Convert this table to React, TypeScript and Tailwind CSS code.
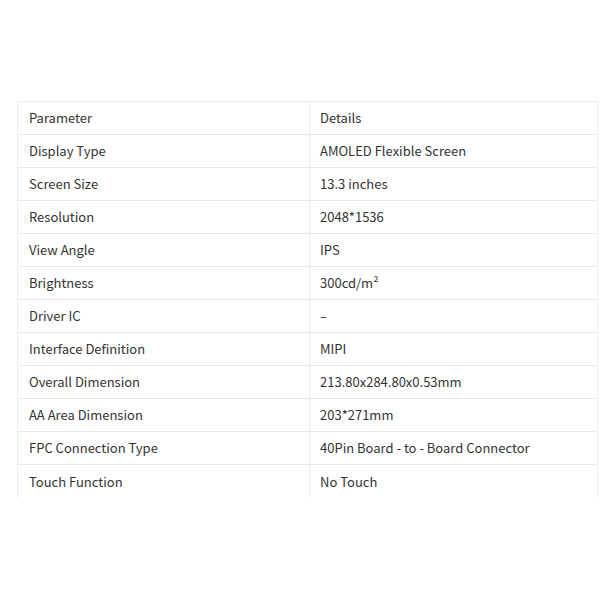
const rows: [string, React.ReactNode][] = [
  ["Parameter", "Details"],
  ["Display Type", "AMOLED Flexible Screen"],
  ["Screen Size", "13.3 inches"],
  ["Resolution", "2048*1536"],
  ["View Angle", "IPS"],
  ["Brightness", "300cd/m²"],
  ["Driver IC", "–"],
  ["Interface Definition", "MIPI"],
  ["Overall Dimension", "213.80x284.80x0.53mm"],
  ["AA Area Dimension", "203*271mm"],
  ["FPC Connection Type", "40Pin Board - to - Board Connector"],
  ["Touch Function", "No Touch"],
];

export default function App() {
  return (
    <div className="w-[600px] h-[600px] bg-white pt-[101px] pl-[17px] pr-[2px] font-['Noto_Sans_CJK_SC',sans-serif] text-[13px] text-[#333]">
      <table className="w-full border-collapse">
        <tbody>
          {rows.map(([k, v], i) => (
            <tr key={i} className={i === rows.length - 1 ? "" : "border-b border-[#e8e8e8]"}>
              <td className={`w-[292px] h-[33px] pl-[11px] border-r border-l border-[#ececec] ${i === 0 ? "border-t" : ""}`}>
                {k}
              </td>
              <td className={`h-[33px] pl-[10px] border-r border-[#ececec] ${i === 0 ? "border-t" : ""}`}>{v}</td>
            </tr>
          ))}
        </tbody>
      </table>
    </div>
  );
}
